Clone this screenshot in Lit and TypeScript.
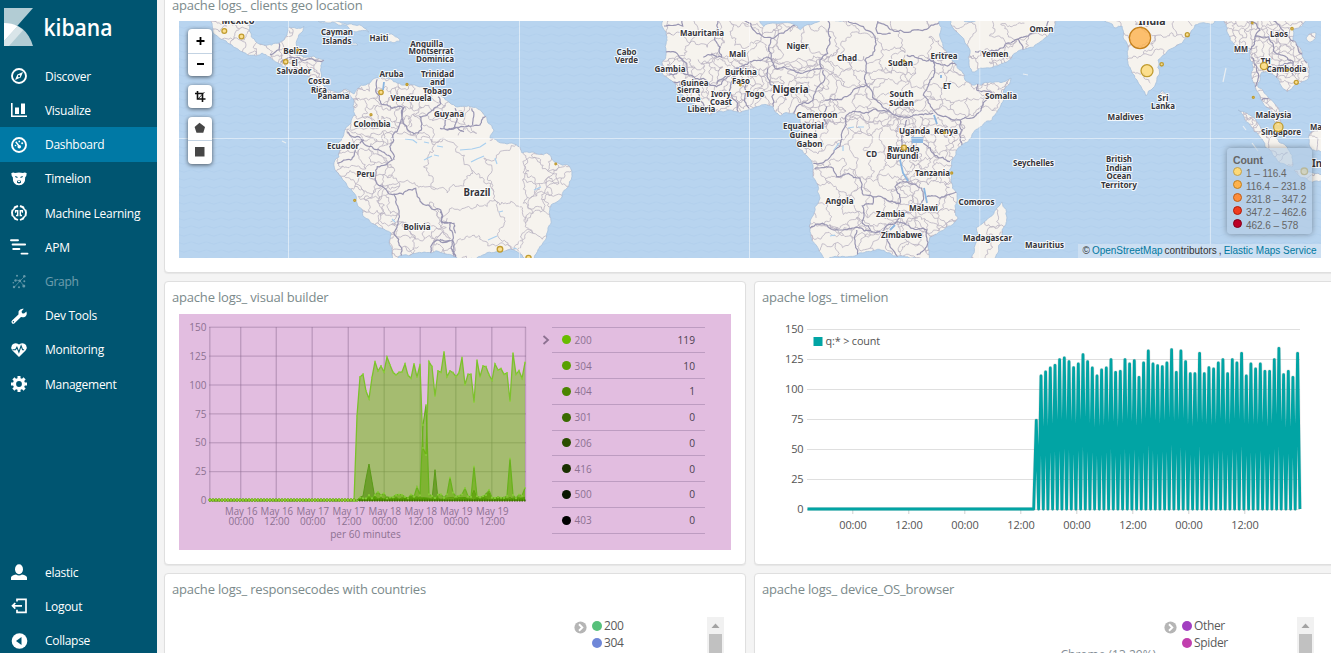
import { LitElement, html, svg, css } from "lit";
import { customElement, property } from "lit/decorators.js";

/* ---------- geometry helpers ---------- */
type Pt = [number, number];
const rng = (seed: number) => () => {
  seed = (seed * 1664525 + 1013904223) % 4294967296;
  return seed / 4294967296;
};
const parse = (s: string): Pt[] => s.trim().split(/\s+/).map((p) => p.split(",").map(Number) as Pt);
// fractal displacement so that coasts and borders look natural
const rough = (pts: Pt[], amount: number, rand: () => number, minLen = 3): Pt[] => {
  const out: Pt[] = [pts[0]];
  const split = (a: Pt, b: Pt) => {
    const dx = b[0] - a[0], dy = b[1] - a[1], len = Math.hypot(dx, dy);
    if (len < minLen) { out.push(b); return; }
    const k = (rand() - 0.5) * amount;
    const m: Pt = [(a[0] + b[0]) / 2 - dy * k, (a[1] + b[1]) / 2 + dx * k];
    split(a, m); split(m, b);
  };
  for (let i = 1; i < pts.length; i++) split(pts[i - 1], pts[i]);
  return out;
};
const toPath = (pts: Pt[]) => "M" + pts.map((p) => p[0].toFixed(1) + " " + p[1].toFixed(1)).join("L");

/* ---------- map ---------- */
const LAND = [
  "209,18 213,33 224,40 232,45 240,51 256,56 262,53 270,57 278,63 289,68 300,71 308,76 316,85 318,91 327,95 336,98 348,93 354,100 355,115 351,123 344,133 338,143 339,157 335,160 335,170 346,183 357,203 364,217 381,228 391,233 391,262 534,262 535,255 542,245 548,230 550,217 551,205 555,203 562,197 569,185 572,173 568,165 558,163 547,153 532,152 522,153 520,147 512,143 502,143 490,138 494,130 488,123 483,113 472,107 457,107 450,103 441,95 427,87 417,86 397,83 391,79 382,77 372,80 361,85 354,94 346,89 337,93 327,90 321,80 321,72 324,60 314,56 296,55 297,50 297,40 303,31 304,26 289,27 287,35 279,43 264,45 256,42 249,30 246,18",
  "663,18 663,28 667,37 666,50 662,62 662,73 670,80 678,90 690,103 709,115 723,112 740,113 760,106 773,107 780,116 793,113 800,118 802,128 795,138 798,148 812,162 813,168 818,185 820,198 812,217 810,230 822,255 824,262 931,262 928,245 930,237 947,227 958,218 957,193 951,182 952,160 962,145 980,127 998,110 1001,105 1011,78 990,82 972,85 965,80 955,63 947,53 942,42 940,37 938,18",
  "950,18 962,37 970,53 972,72 990,68 1012,57 1040,42 1055,25 1057,18",
  "1002,202 1007,218 1002,230 995,260 971,260 977,240 977,227 990,217",
  "1101,18 1115,28 1122,26 1123,37 1128,57 1137,80 1146,96 1153,88 1159,75 1158,60 1173,48 1188,36 1195,25 1213,24 1217,18",
  "1162,90 1158,98 1161,104 1167,105 1170,99",
  "1222,18 1227,32 1235,47 1236,54 1250,50 1253,67 1255,87 1263,103 1273,120 1282,128 1280,113 1268,97 1258,87 1262,72 1277,78 1287,92 1290,90 1307,80 1308,63 1293,40 1293,30 1303,24 1311,18",
  "1238,110 1250,115 1267,133 1290,152 1292,167 1280,163 1265,147 1250,125",
  "1325,128 1310,133 1312,150 1325,153",
  "1294,170 1310,172 1325,177 1325,181 1300,177",
  "1306,38 1309,34 1316,33 1315,39 1309,42",
  "318,21 340,22 355,25 369,32 356,32 345,25 328,23",
  "380,36 390,34 400,41 388,42",
  "350,43 356,43 358,45 352,45",
];
const rc = rng(12);
const coast = LAND.map((s) => { const p = parse(s); p.push(p[0]); return toPath(rough(p, 0.3, rc, 3)) + "Z"; }).join("");

const at = (ox: number, s: string): Pt[] => parse(s).map(([x, y]) => [ox + x / 3, y / 3] as Pt);
const BORDERS: [number, string[]][] = [
  [164, ["275,60 300,60", "318,165 345,150 345,130", "350,185 400,172 450,180 480,182", "395,165 360,150", "640,238 635,270 650,310 685,325 720,322 718,370 750,402 772,390 768,350 800,335 830,310 822,290", "718,322 710,365 690,400 690,480", "550,395 590,415 650,452 685,480 640,500 636,545 675,582 755,565 760,590 830,630 832,665 870,670 875,700", "690,585 705,640 690,700 710,740 712,773", "600,420 560,480 520,490", "840,345 840,385 900,395", "800,773 800,740 820,720 865,720 875,773"]],
  [440, ["0,385 45,385 70,380 100,378 120,375 137,348", "45,325 50,350 45,385", "95,325 98,375", "0,635 5,668 32,668 40,710 40,773", "0,718 30,720", "668,155 700,155 740,190 745,225 685,225", "728,60 728,78 672,78", "745,225 790,235 830,260 850,240 900,200", "760,250 780,300 800,340", "690,240 720,245 735,280", "832,60 845,172 790,172"]],
  [700, ["130,60 205,112 215,115 305,60", "215,115 213,175 150,185 110,205 75,230 50,250", "213,175 225,205 275,210 330,212 365,205 360,180 390,130 382,60", "430,62 520,102 518,165 495,180 495,225 510,265", "533,68 717,68", "533,60 533,100 572,100", "370,210 375,235 345,280 325,310 290,320 275,345", "375,300 440,290 500,255", "510,265 540,310 575,340 640,345 700,340", "440,345 480,335 575,340", "440,345 425,400 400,460 360,490 340,490", "345,505 400,505 410,530 480,535 490,585 518,590 518,612 487,618 487,670 515,695 430,690 330,685", "700,180 690,240 670,285 700,330 730,350 780,360 840,335 890,285", "690,180 760,190 810,225 830,270 890,285", "780,360 780,420 785,435", "670,430 750,485", "620,360 605,410 600,480", "680,590 720,595 770,575", "518,590 560,600 600,610 585,560 620,545 665,565 665,610 610,640 590,665 545,695 515,695", "545,695 570,740 600,773", "590,665 680,690 680,740 650,765", "470,690 470,773", "145,240 150,330", "205,205 220,320", "100,240 115,335", "380,320 380,370 305,370", "620,165 700,180 750,150"]],
  [940, ["105,155 140,160 200,130 235,118 250,150", "235,118 315,90 325,62", "930,150 945,110 960,90 930,62", "945,110 985,110 1000,150 1060,185 1060,225", "1000,62 1040,100 1080,160 1100,190", "1010,235 1010,200 1060,190", "935,170 950,200 945,260", "965,300 985,295"]],
];
const rb = rng(77);
const borders = BORDERS.map(([ox, ls]) => ls.map((l) => toPath(rough(at(ox, l), 0.35, rb, 2.5))).join("")).join("");

// jittered cells for the provinces: x0, y0, x1, y1, cell size
const MESH: number[][] = [
  [205, 18, 290, 60, 12], [280, 50, 354, 100, 7], [335, 78, 400, 132, 10], [400, 84, 500, 140, 17],
  [335, 132, 392, 260, 11], [392, 150, 552, 262, 31], [520, 150, 576, 205, 14], [392, 222, 450, 262, 13],
  [660, 18, 770, 60, 23], [660, 60, 830, 120, 8], [770, 18, 940, 70, 25], [825, 70, 900, 120, 13],
  [795, 118, 900, 225, 14], [900, 60, 1012, 118, 13], [895, 118, 962, 185, 8], [808, 222, 960, 262, 13],
  [900, 185, 960, 222, 14], [950, 18, 1060, 75, 18], [970, 200, 1010, 262, 22], [1100, 18, 1220, 98, 20],
  [1220, 18, 1312, 130, 6], [1238, 108, 1325, 182, 14],
];
const rm = rng(5);
const mesh = MESH.map(([x0, y0, x1, y1, c]) => {
  const nx = Math.round((x1 - x0) / c), ny = Math.round((y1 - y0) / c);
  const g: Pt[][] = [];
  for (let j = 0; j <= ny; j++) {
    g.push([]);
    for (let i = 0; i <= nx; i++) g[j].push([x0 + (i + (j % 2) * 0.5 + (rm() - 0.5) * 0.8) * c, y0 + (j + (rm() - 0.5) * 0.8) * c]);
  }
  let d = "";
  for (let j = 0; j <= ny; j++) for (let i = 0; i <= nx; i++) {
    if (i < nx && rm() < 0.8) d += toPath(rough([g[j][i], g[j][i + 1]], 0.7, rm, 3));
    if (j < ny && rm() < 0.75) d += toPath(rough([g[j][i], g[j + 1][i]], 0.7, rm, 3));
  }
  return d;
}).join("");

type Label = [string, number, number, number, number?];
const LABELS: Label[] = [
  ["México", 238, 23.7, 33, 11], ["Cayman", 337, 35.3, 32], ["Islands", 337, 43.7, 29], ["Haiti", 379, 41.3, 19],
  ["Anguilla", 426.7, 46.8, 33], ["Montserrat", 431, 54.3, 45], ["Dominica", 435, 61.6, 38], ["Belize", 295.3, 54.2, 24],
  ["El", 294.5, 65.6, 6], ["Salvador", 294, 74.3, 35], ["Costa", 319, 84.3, 22], ["Rica", 319, 92.6, 16], ["Panama", 333.5, 98.6, 32],
  ["Aruba", 391.5, 77, 24], ["Trinidad", 437.5, 77, 33], ["and", 437.5, 85.3, 15], ["Tobago", 437.5, 93.7, 29],
  ["Venezuela", 411, 100.6, 41], ["Guyana", 449, 117, 30], ["Colombia", 372, 127, 37], ["Ecuador", 343, 149, 32],
  ["Peru", 365.5, 177, 18], ["Bolivia", 417, 230.3, 27], ["Brazil", 477, 195.6, 27, 10.5], ["Cabo", 626.5, 54.5, 20],
  ["Verde", 626.5, 63, 23], ["Mauritania", 702, 36, 44], ["Gambia", 670, 72.3, 31], ["Guinea", 694.5, 86.3, 28],
  ["Sierra", 688.5, 93.3, 23], ["Leone", 688.5, 101.5, 24], ["Ivory", 721, 96.5, 20], ["Coast", 721, 105, 22],
  ["Liberia", 701.5, 112.3, 28], ["Mali", 737.5, 56.7, 17], ["Niger", 797.5, 49.3, 22], ["Burkina", 741, 75.3, 32],
  ["Faso", 741, 83.7, 18], ["Togo", 755, 97, 19], ["Nigeria", 790.5, 93.3, 36, 10.8], ["Cameroon", 817, 118.3, 41],
  ["Equatorial", 803.5, 129.3, 41], ["Guinea", 803.5, 137.7, 28], ["Gabon", 809.5, 146.7, 26], ["Chad", 847, 61, 20],
  ["Sudan", 900.5, 66.3, 25], ["Eritrea", 944, 59, 27], ["ET", 947, 89, 8], ["South", 901.5, 97.3, 24], ["Sudan", 901.5, 105.7, 25],
  ["Uganda", 914.5, 134, 31], ["Kenya", 946, 134.3, 24], ["CD", 871.5, 157.3, 11], ["Rwanda", 903.5, 152, 32],
  ["Burundi", 902.5, 159.3, 32], ["Tanzania", 932.5, 175.7, 35], ["Angola", 839.5, 203.7, 28], ["Malawi", 923.5, 210.5, 29],
  ["Zambia", 890.5, 217.3, 29], ["Zimbabwe", 901.5, 238.3, 41], ["Comoros", 976.5, 205, 36], ["Oman", 1041.5, 31.7, 24],
  ["Yemen", 995, 56.7, 27], ["Somalia", 1001, 98.7, 32], ["Madagascar", 987.5, 241, 49], ["Mauritius", 1044.5, 247.7, 39],
  ["Seychelles", 1033.5, 166, 41], ["Maldives", 1125.5, 120, 36], ["Sri", 1163, 100.5, 11], ["Lanka", 1163, 109, 24],
  ["India", 1152, 24.8, 27, 11], ["British", 1119, 162, 26], ["Indian", 1119, 170.5, 26], ["Ocean", 1119, 179, 25],
  ["Territory", 1119, 187.5, 36], ["Laos", 1279, 37, 18], ["MM", 1241, 52.3, 14], ["TH", 1265.7, 64.3, 10],
  ["Cambodia", 1286.5, 72, 40], ["Malaysia", 1273.5, 118.3, 36], ["Singapore", 1281, 135, 40], ["Ma", 1316, 129.7, 12],
  ["In", 1317, 167, 10, 11],
];
const DOTS: [number, number, number][] = [
  [224.3, 31, 2.4], [241.5, 36.5, 2.4], [298, 50, 0.8], [285.7, 61.7, 2.2], [407, 84.5, 1], [381, 92.3, 2.2], [371, 114.7, 1],
  [354.7, 200.3, 1], [555.7, 164, 0.8], [500, 249.3, 2.8], [528.5, 258, 2.6], [740.3, 85, 0.8], [904, 61, 0.8], [944.3, 132.7, 1],
  [904, 147.7, 2.5], [951.7, 173, 1], [1147, 70.7, 6], [1161.7, 64.3, 1.7], [1187.3, 34.7, 2], [1252.3, 23, 0.8], [1292, 28.7, 1.2],
  [1264, 66, 3.6], [1287.3, 70.3, 0.8], [1296.3, 82.3, 2], [1253.3, 97.3, 1], [1278.3, 127, 4.7], [1304.3, 171.3, 3.3],
];

@customElement("geo-map")
class GeoMap extends LitElement {
  static styles = css`
    :host { display: block; position: relative; height: 237px; overflow: hidden; font-family: "Noto Sans", sans-serif; }
    svg { display: block; }
    .lbl { font: 700 8.4px "Noto Sans", sans-serif; fill: #35353b; stroke: #fff; stroke-width: 2.2px; stroke-opacity: .85; paint-order: stroke; stroke-linejoin: round; text-anchor: middle; }
    .tools { position: absolute; left: 9px; top: 8px; display: flex; flex-direction: column; gap: 8.500px; }
    .group { display: flex; flex-direction: column; width: 24px; border-radius: 4px; background: #fff; box-shadow: 0 1px 4px rgba(0,0,0,.6); }
    .btn { height: 23.500px; display: flex; align-items: center; justify-content: center; }
    .btn + .btn { border-top: 1px solid #c3d3e3; height: 22.500px; }
    .legend { position: absolute; right: 9px; top: 127px; width: 85px; height: 86px; box-sizing: border-box; padding: 5.500px 0 0 6px; border-radius: 4px; background: rgba(180,203,226,.6); box-shadow: 0 0 6px rgba(0,0,0,.35); color: #666; font: 10px/13px "Liberation Sans", sans-serif; }
    .head { font-weight: 700; font-size: 10.500px; height: 12px; letter-spacing: -.1px; }
    .row { display: flex; align-items: center; gap: 4px; white-space: nowrap; height: 13px; }
    .row span { padding-top: 2px; letter-spacing: -.05px; }
    .dot { width: 7px; height: 7px; border: 1px solid; border-radius: 50%; margin-bottom: 1px; flex: none; }
    .attr { position: absolute; right: 0; bottom: 0; height: 14px; padding: 0 4.5px; background: rgba(211,227,243,.75); color: #333; font: 10px/14px "Liberation Sans", sans-serif; white-space: pre; width: 234px; display: flex; justify-content: space-between; }
    .attr a { color: #0078a0; }
  `;
  render() {
    const scale = [["#fed976", "#c0a050", "1 – 116.4"], ["#feb24c", "#be7f22", "116.4 – 231.8"], ["#fd8d3c", "#bd5f1b", "231.8 – 347.2"], ["#f03b20", "#b01d0a", "347.2 – 462.6"], ["#bd0026", "#80001a", "462.6 – 578"]];
    return html`
      <svg width="1142" height="237" viewBox="179 21 1142 237">
        <defs>
          <clipPath id="land"><path d=${coast} /></clipPath>
          <pattern id="sea" width="15" height="8" patternUnits="userSpaceOnUse"><path d="M0 3q4 2.4 7.500 0t7.500 0" fill="none" stroke="#afcdeb" stroke-width=".6" /></pattern>
        </defs>
        <rect x="179" y="21" width="1142" height="237" fill="#b8d4ef" />
        <rect x="179" y="21" width="1142" height="237" fill="url(#sea)" />
        <path d=${coast} fill="#f6f3ee" stroke="#a7c0dc" stroke-width=".8" />
        <g clip-path="url(#land)" fill="none">
          <path d=${mesh} stroke="#b9b2c2" stroke-width=".8" />
          <path d=${borders} stroke="#9895b2" stroke-width="1.200" />
          <path d="M911 137h12v6h-11z" fill="#8fb9e2" />
          <path d="M900 160l3 13 5 8M924 188l3 15M934 115l3 9M890 230l5-5M384 82l-1 8M941 75v3" stroke="#8ab5e0" stroke-width="1.800" />
          <path d="M405 139l8 1 4 3M424 142l5 1M437 146l6 1M424 160l8-4M434 155l5 1M460 150l12-1 8-2 6-4M471 162l6-3 7-3M495 158l2 6M534 190l7-3M834 150l5-7M843 146v5M848 128l6-1M858 127l6 0M499 212l4-1M488 240l9-4M392 219l3 3M830 236l5-1M513 248l4 1" stroke="#a8cfef" stroke-width="1.200" />
        </g>
        <path d="M1226 68l-3 14M1243 126l3 4M1252 143l6 8M282 141l4 2M1023 74l5 1M437 50l1 6M438 70v3" stroke="#e9eef2" stroke-width="1.200" fill="none" />
        <path d="M288.500 21v237M519.500 21v237M749.500 21v237M979.800 21v237M1210.400 21v237M179 138.500h1142" stroke="#fff" stroke-opacity=".5" fill="none" />
        ${LABELS.map(([t, x, y, w, s]) => svg`<text class="lbl" x=${x} y=${y} textLength=${w} lengthAdjust="spacingAndGlyphs" style=${s ? `font-size:${s}px` : ""}>${t}</text>`)}
        ${DOTS.map(([x, y, r]) => svg`<circle cx=${x} cy=${y} r=${r} fill="#fed976" fill-opacity=".8" stroke="#c09c30" stroke-width="1.300" />`)}
        <circle cx="1140" cy="38" r="10.600" fill="#feb24c" fill-opacity=".8" stroke="#c4811c" stroke-width="1.200" />
      </svg>
      <div class="tools">
        <div class="group">
          <div class="btn"><svg width="12" height="12"><path d="M6.500 2v8M2.500 6h8" stroke="#000" stroke-width="1.800" /></svg></div>
          <div class="btn"><svg width="12" height="12"><path d="M3 5h7" stroke="#000" stroke-width="2" /></svg></div>
        </div>
        <div class="group"><div class="btn"><svg width="12" height="12"><path d="M3.500 1v8h8M1 3.500h7.500V12" fill="none" stroke="#111" stroke-width="1.600" /><path d="M4 9l6.500-7" stroke="#111" stroke-width=".8" /></svg></div></div>
        <div class="group">
          <div class="btn"><svg width="12" height="12"><path d="M5.500.8 11 5 9.300 10.800H2.500L.6 5z" fill="#464646" /></svg></div>
          <div class="btn"><svg width="12" height="12"><path d="M1 1h9.500v9.500H1z" fill="#464646" /></svg></div>
        </div>
      </div>
      <div class="legend">
        <div class="head">Count</div>
        ${scale.map(([f, b, t]) => html`<div class="row"><i class="dot" style="background:${f};border-color:${b}"></i><span>${t}</span></div>`)}
      </div>
      <div class="attr"><span>©</span><a>OpenStreetMap</a><span>contributors</span><span>,</span><a>Elastic Maps Service</a></div>
    `;
  }
}

/* ---------- visual builder ---------- */
const MAIN = [675, 420, 303, 295, 345, 368, 305, 257, 285, 270, 288, 243, 267, 289, 297, 289, 288, 264, 298, 307, 264, 303, 266, 516, 537, 257, 272, 360, 285, 289, 228, 302, 285, 290, 302, 290, 245, 326, 295, 295, 378, 253, 302, 270, 272, 296, 313, 264, 282, 278, 295, 291, 375, 232, 295, 284, 307, 260];
const X = (k: number) => 210 + k * 3;
const Y = (z: number) => 275 + z / 3;
const rs = rng(31);
const series = (base: number, spread: number, peaks: Record<number, number>): Pt[] =>
  Array.from({ length: 58 }, (_, i) => [X(48 + i), Y(peaks[48 + i] ?? (i < 2 ? 674 : base - rs() * spread))] as Pt);
const S200: Pt[] = MAIN.map((z, i) => [X(48 + i), Y(z)]);
const S304 = series(668, 13, { 56: 648, 58: 652, 69: 633, 71: 447, 72: 387, 73: 655, 80: 605, 79: 655, 81: 650, 85: 637, 88: 572, 93: 642, 100: 548, 105: 636 });
const S404 = series(672, 9, { 51: 660, 52: 608, 53: 564, 54: 616, 55: 668, 75: 581, 88: 643, 92: 652, 93: 650 });
const S301 = series(672, 13, {});
const area = (p: Pt[]) => toPath(p) + "L525 499.800L354 499.800Z";
const STATUS: [string, number, string][] = [["200", 119, "#68bc00"], ["304", 10, "#58a000"], ["404", 1, "#4a8500"], ["301", 0, "#3a6a00"], ["206", 0, "#2b4e00"], ["416", 0, "#1a3000"], ["500", 0, "#0a1600"], ["403", 0, "#000"]];

@customElement("visual-builder")
class VisualBuilder extends LitElement {
  static styles = css`
    :host { display: flex; height: 236px; background: #e2bde0; font-family: "Open Sans", sans-serif; }
    .chart { flex: none; display: block; }
    .t { font: 10px "Open Sans", sans-serif; fill: #8c7191; }
    .end { text-anchor: end; } .mid { text-anchor: middle; }
    .chev { margin: 19px 0 0 2px; flex: none; }
    .list { margin: 13px 0 0 1px; width: 153px; border-top: 1px solid #bd9cc1; height: 206px; display: flex; flex-direction: column; }
    .row { flex: 1; display: flex; align-items: center; padding: 0 10px 0 9.5px; border-bottom: 1px solid #bd9cc1; font-size: 10px; color: #8c7191; box-sizing: border-box; line-height: 1; }
    .dot { width: 9px; height: 9px; border-radius: 50%; margin-right: 4px; }
    .val { margin-left: auto; color: #4d3f50; font-size: 10.200px; }
  `;
  render() {
    const vx = [240.7, 276.3, 312.2, 348.3, 384.2, 420.2, 455.8, 491.8];
    const days = ["16", "16", "17", "17", "18", "18", "19", "19"];
    return html`
      <svg class="chart" width="360" height="236" viewBox="179 313 360 236">
        ${[0, 1, 2, 3, 4, 5, 6].map((i) => svg`<path d=${`M209 ${499.6 - i * 28.9}h317`} stroke="#8a6a8f" stroke-opacity=".5" /><text class="t end" x="206.500" y=${503 - i * 28.8}>${i * 25}</text>`)}
        <path d=${["209.8", ...vx, "525.5"].map((x) => `M${x} 326v174`).join("")} stroke="#8a6a8f" stroke-opacity=".4" stroke-width="1.400" />
        <path d=${area(S200)} fill="#68bc00" fill-opacity=".5" />
        <path d=${toPath(S200)} fill="none" stroke="#7cc12c" stroke-width="1.300" />
        <path d=${area(S404)} fill="#4a8a00" fill-opacity=".6" />
        <path d=${toPath(S404)} fill="none" stroke="#5a9a18" />
        <path d=${area(S304)} fill="#60ac00" fill-opacity=".55" />
        <path d=${toPath(S304)} fill="none" stroke="#68b21c" stroke-width="1.200" />
        <path d=${area(S301)} fill="#4f9a00" fill-opacity=".7" />
        <path d="M209 499.500h317" stroke="#3c7000" stroke-width="2.200" stroke-dasharray="1.500 1" />
        ${Array.from({ length: 49 }, (_, i) => svg`<circle cx=${X(i)} cy="499" r="1.400" fill="#a3dc38" stroke="#5d9f10" stroke-width=".7" />`)}
        ${[...S200, ...S304].map(([x, y]) => svg`<circle cx=${x} cy=${y} r="1.100" fill="#8ccf3c" fill-opacity=".8" />`)}
        ${vx.map((x, i) => svg`<text class="t mid" x=${x + 0.5} y="513.500" textLength="32.500" lengthAdjust="spacingAndGlyphs">May ${days[i]}</text><text class="t mid" x=${x + 0.5} y="524.300" textLength="25.500" lengthAdjust="spacingAndGlyphs">${i % 2 ? "12:00" : "00:00"}</text>`)}
        <text class="t mid" x="365.500" y="537.300" textLength="70.500" lengthAdjust="spacingAndGlyphs">per 60 minutes</text>
      </svg>
      <svg class="chev" width="10" height="14"><path d="M2.500 3l4.500 4-4.500 4" fill="none" stroke="#8c7191" stroke-width="1.800" /></svg>
      <div class="list">
        ${STATUS.map(([c, v, col]) => html`<div class="row"><i class="dot" style="background:${col}"></i>${c}<span class="val">${v}</span></div>`)}
      </div>`;
  }
}

/* ---------- timelion ---------- */
const PEAKS = [325, 192, 180, 168, 160, 143, 138, 149, 167, 156, 128, 149, 168, 192, 174, 168, 143, 181, 178, 143, 156, 146, 196, 153, 117, 156, 161, 164, 153, 113, 181, 117, 149, 185, 185, 124, 185, 167, 171, 153, 143, 185, 143, 153, 124, 192, 156, 171, 156, 178, 178, 143, 109, 188, 178, 196, 124];
const tl = "M807.500 508H1033.700" + PEAKS.map((p, i) => `L${(1036.3 + i * 4.666).toFixed(1)} ${(311 + p / 3).toFixed(1)}L${(1038.6 + i * 4.666).toFixed(1)} 508`).join("");

@customElement("timelion-chart")
class TimelionChart extends LitElement {
  static styles = css`
    :host { display: block; height: 236px; }
    svg { display: block; }
    .t { font: 11px "Open Sans", sans-serif; fill: #545454; letter-spacing: -.15px; }
    .end { text-anchor: end; } .mid { text-anchor: middle; }
  `;
  render() {
    return html`<svg width="552" height="236" viewBox="769 313 552 236">
      ${[0, 1, 2, 3, 4, 5, 6].map((i) => svg`<path d=${`M807 ${Math.round(508 - i * 29.95) + 0.5}h493`} stroke="#dfdfdf" /><text class="t end" x="803.500" y=${512 - i * 29.95}>${i * 25}</text>`)}
      ${[0, 1, 2, 3, 4, 5, 6, 7].map((i) => svg`<path d=${`M${852.8 + i * 56} 508v5`} stroke="#d0d0d0" /><text class="t mid" x=${853 + i * 56} y="528">${i % 2 ? "12:00" : "00:00"}</text>`)}
      <path d=${tl} fill="none" stroke="#000" stroke-opacity=".1" stroke-width="4" stroke-linejoin="round" />
      <path d=${tl} fill="none" stroke="#01a4a4" stroke-width="2.800" stroke-linejoin="round" />
      <rect x="813.500" y="336" width="9" height="9" fill="#01a4a4" />
      <text class="t" x="825.500" y="344" textLength="54.500" lengthAdjust="spacingAndGlyphs">q:* &gt; count</text>
    </svg>`;
  }
}

/* ---------- panel legends with a scrollbar ---------- */
@customElement("side-legend")
class SideLegend extends LitElement {
  @property({ attribute: false }) items: [string, string][] = [];
  @property() note = "";
  static styles = css`
    :host { display: flex; position: relative; height: 80px; padding-top: 11px; margin-left: 394.500px; font: 12px/17px "Open Sans", sans-serif; letter-spacing: -.35px; color: #5a5a5a; }
    .tog { margin: 4px 5.500px 0 0; flex: none; }
    .list { width: 116px; }
    .row { display: flex; align-items: center; gap: 2px; height: 17px; }
    .dot { width: 10px; height: 10px; border-radius: 50%; margin-top: 1px; }
    .bar { width: 17px; background: #f1f1f1; margin-left: -1px; }
    .bar svg { display: block; }
    .note { position: absolute; left: -103px; top: 40.500px; color: #848e96; font-size: 12px; letter-spacing: 0; white-space: nowrap; }
  `;
  render() {
    return html`
      <svg class="tog" width="13" height="13"><circle cx="6.500" cy="6.500" r="6.100" fill="#b5b5b5" /><path d="M5 3.300l3.300 3.200L5 9.700" fill="none" stroke="#fff" stroke-width="1.900" /></svg>
      <div class="list">${this.items.map(([c, t]) => html`<div class="row"><i class="dot" style="background:${c}"></i>${t}</div>`)}</div>
      <div class="bar"><svg width="17" height="80"><path d="M4.500 11l4-4.500 4 4.500z" fill="#a3a3a3" /><path d="M2 17h13v63H2z" fill="#c1c1c1" /></svg></div>
      ${this.note ? html`<div class="note">${this.note}</div>` : ""}`;
  }
}

/* ---------- navigation ---------- */
const w = "#fff";
const ICONS: Record<string, unknown> = {
  Discover: svg`<circle cx="8" cy="8" r="7" fill="none" stroke=${w} stroke-width="1.900" /><path fill-rule="evenodd" d="M12 4 9.700 9.500 4 12 6.400 6.400zM8 7a1.100 1.100 0 1 0 .1 0z" fill=${w} />`,
  Visualize: svg`<path d="M.8 1v13.200H16" fill="none" stroke=${w} stroke-width="1.600" /><path d="M4 5.500h4V12H4zM10 1.500h4V12h-4z" fill=${w} />`,
  Dashboard: svg`<circle cx="8" cy="8" r="7" fill="none" stroke=${w} stroke-width="1.900" /><path d="M4.800 4.800l3 4" stroke=${w} stroke-width="1.500" /><circle cx="8.300" cy="9.700" r="1.800" fill=${w} /><circle cx="8.300" cy="4.400" r=".9" fill=${w} /><circle cx="11.200" cy="6.300" r="1" fill=${w} /><circle cx="4.500" cy="8.500" r=".8" fill=${w} />`,
  Timelion: svg`<path d="M.3 2.300Q2 1 4 2q4-1 8 0 2-1 3.700.3-.1 3-1.500 4 .3 7.700-6.200 8Q1.500 14 1.800 6.300.4 5.300.3 2.300z" fill=${w} /><path d="M4.300 5.500l2.200 1M11.700 5.500l-2.200 1" stroke="#005571" stroke-width="1.100" /><path d="M6 10.300q2-2.600 4 0v1.400q-2 1.600-4 0z" fill="#005571" /><path d="M7 9.500h2v1.500H7z" fill=${w} />`,
  "Machine Learning": svg`<path d="M7 1 3.800 2.300 3.200 3.800M1.500 4.800 1 7.500 1.500 11M3.200 12l.8 1.700L7 15M9 1l3.200 1.300.6 1.500M14.500 4.800l.5 2.700-.5 3.500M12.800 12l-.8 1.700L9 15" fill="none" stroke=${w} stroke-width="1.900" /><path d="M3.800 3.200 1.600 5.200M12.200 3.200l2.200 2M1.500 10.800l2.200 1.900M14.500 10.800l-2.200 1.900M4.600 7.800V5.700h2.100v4.800H5M11.400 7.800V5.700H9.300v4.800H11" fill="none" stroke=${w} stroke-width="1.400" />`,
  APM: svg`<path d="M0 1.300h7M1.600 5.500h12.500M2.200 10h6.200M10.500 14.600h6" stroke=${w} stroke-width="1.900" stroke-linecap="round" />`,
  Graph: svg`<g opacity=".4"><path d="M5.500 6 9 7l4.500-4.500M9 7l3.500 4.500M9 7l-5.500 6" fill="none" stroke=${w} stroke-width=".7" /><g fill=${w}><circle cx="6" cy="1.800" r="1" /><circle cx="13.300" cy="2.200" r="1.200" /><circle cx="8.800" cy="6.800" r="1.400" /><circle cx="4.500" cy="6.500" r="1.200" /><circle cx="2.300" cy="8.800" r=".8" /><circle cx="3" cy="13" r="1.200" /><circle cx="8" cy="13.200" r="1" /><circle cx="12.800" cy="12" r="1.500" /><circle cx="13.300" cy="7.300" r="1" /></g></g>`,
  "Dev Tools": svg`<path d="M2.300 13.900 9.500 7" stroke=${w} stroke-width="3.600" stroke-linecap="round" /><path d="M12.800.8 10.600 3.200l.4 2 2 .4 2.500-2.100q1 4.500-2.500 5.700-2.500.6-4.300-.9Q6.800 6 7.600 3.300 9 .2 12.800.8z" fill=${w} /><circle cx="2.400" cy="13.700" r=".7" fill="#005571" />`,
  Monitoring: svg`<path d="M8 15 1.200 8.200Q-.6 5.400 1 2.900 4-.4 8 2.600q4-3 7 .3 1.600 2.500-.2 5.300z" fill=${w} /><path d="M1.500 7.700h3l1.400-2.500 2 5 2.200-6.400 1.500 3.900h1.500" fill="none" stroke="#005571" stroke-width="1.100" />`,
  Management: svg`<circle cx="8" cy="8" r="4.500" fill="none" stroke=${w} stroke-width="3.200" /><path d="M8 0v3M8 13v3M0 8h3M13 8h3M2.400 2.400l2 2M11.600 11.600l2 2M2.400 13.600l2-2M11.600 4.400l2-2" stroke=${w} stroke-width="3" />`,
  elastic: svg`<ellipse cx="8" cy="5.300" rx="4" ry="5" fill=${w} /><path d="M0 16v-2.500Q.3 11.500 5 10.500q3 2.200 6 0 4.700 1 5 3V16z" fill=${w} />`,
  Logout: svg`<path d="M6 3.500V1.300h9v13H6v-2.500M1.500 7.800H11M4.300 5 1.500 7.800l2.800 2.800" fill="none" stroke=${w} stroke-width="1.700" />`,
  Collapse: svg`<circle cx="8.500" cy="8" r="7.800" fill=${w} /><path d="M10.500 4v8L5 8z" fill="#005571" />`,
};

@customElement("side-nav")
class SideNav extends LitElement {
  static styles = css`
    :host { display: flex; flex-direction: column; width: 157px; height: 653px; flex: none; background: #005571; color: #fff; font: 12px "Open Sans", sans-serif; letter-spacing: -.28px; }
    .brand { height: 59px; display: flex; align-items: flex-start; padding: 8px 0 0 4px; box-sizing: border-box; }
    .name { font: 600 23px "Open Sans", sans-serif; fill: #fff; letter-spacing: 0; }
    .item { height: 34.240px; display: flex; align-items: center; }
    .item svg { margin: 0 18px 0 11px; overflow: visible; }
    .active { background: #0079a5; }
    .off span { opacity: .42; }
    .bottom { margin-top: auto; height: 98px; }
  `;
  item(t: string) {
    return html`<div class="item ${t === "Dashboard" ? "active" : ""} ${t === "Graph" ? "off" : ""}"><svg width="16" height="16">${ICONS[t]}</svg><span>${t}</span></div>`;
  }
  render() {
    return html`
      <div class="brand"><svg width="120" height="42">
        <path d="M0 0h29L0 33z" fill="#b2ccd4" /><path d="M0 15Q22 15 29 38H0z" fill="#b2ccd4" /><path d="M0 15q8 0 13.500 3.200L0 33z" fill="#fff" /><path d="M13.500 18.200q3 1.500 5.500 4L5 38H0v-5z" fill="#d9e5e9" />
        <text class="name" x="39.500" y="28" textLength="69" lengthAdjust="spacingAndGlyphs">kibana</text>
      </svg></div>
      ${["Discover", "Visualize", "Dashboard", "Timelion", "Machine Learning", "APM", "Graph", "Dev Tools", "Monitoring", "Management"].map((t) => this.item(t))}
      <div class="bottom">${["elastic", "Logout", "Collapse"].map((t) => this.item(t))}</div>`;
  }
}

@customElement("app-root")
class AppRoot extends LitElement {
  static styles = css`
    :host { display: flex; width: 100%; height: 653px; overflow: hidden; background: #f4f4f4; font-family: "Open Sans", sans-serif; }
    .grid { display: grid; grid-template-columns: 582px 582px; grid-template-rows: 283.500px 284px 284px; row-gap: 8px; column-gap: 8px; margin: -11px 0 0 7px; flex: none; }
    .panel { box-sizing: border-box; border: 1px solid #dfdfdf; border-radius: 4px; background: #fff; box-shadow: 0 1px 1px #e6e6e6; overflow: hidden; }
    .wide { grid-column: span 2; }
    .title { height: 32px; padding-left: 7px; font-size: 13px; line-height: 30px; letter-spacing: -.19px; color: #7b8a8b; box-sizing: border-box; }
    .body { padding: 0 14px; }
    .wide .title { height: 31px; }
  `;
  render() {
    return html`
      <side-nav></side-nav>
      <div class="grid">
        <section class="panel wide"><div class="title">apache logs_ clients geo location</div><div class="body"><geo-map></geo-map></div></section>
        <section class="panel"><div class="title">apache logs_ visual builder</div><div class="body"><visual-builder></visual-builder></div></section>
        <section class="panel"><div class="title">apache logs_ timelion</div><div class="body"><timelion-chart></timelion-chart></div></section>
        <section class="panel"><div class="title">apache logs_ responsecodes with countries</div><div class="body"><side-legend .items=${[["#57c17b", "200"], ["#6f87d8", "304"]]}></side-legend></div></section>
        <section class="panel"><div class="title">apache logs_ device_OS_browser</div><div class="body"><side-legend note="Chrome (13.29%)" .items=${[["#a23fc1", "Other"], ["#c13fae", "Spider"]]}></side-legend></div></section>
      </div>`;
  }
}
